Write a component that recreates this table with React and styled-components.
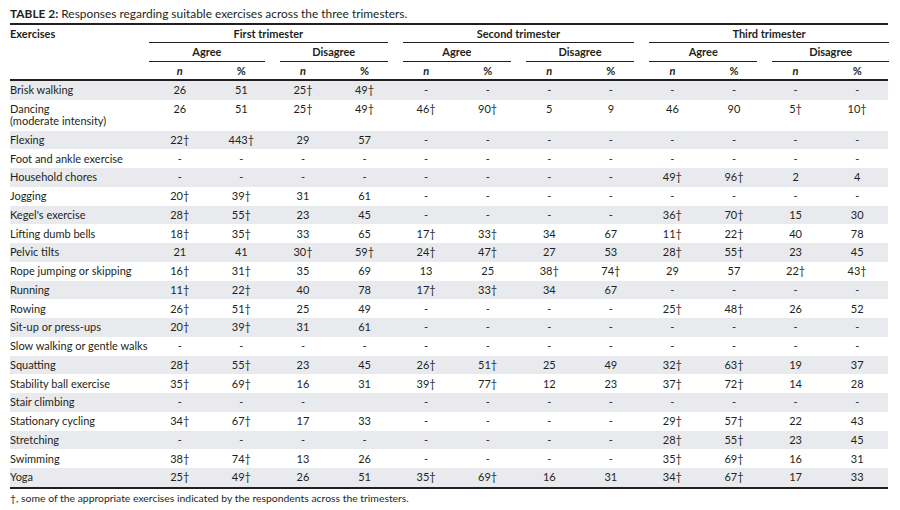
import React from "react"
import styled, { createGlobalStyle } from "styled-components"

const GlobalStyle = createGlobalStyle`
  body {
    margin: 0;
    background: #ffffff;
    color: #231f20;
    font-family: Lato, "Liberation Sans", sans-serif;
  }
`

const Page = styled.div`
  width: 900px;
  height: 510px;
  padding: 7px 12px 0 10px;
  box-sizing: border-box;
`

const Caption = styled.div`
  font-size: 11.9px;
  line-height: 14px;
  white-space: nowrap;
  b {
    font-weight: 700;
  }
`

const Table = styled.table`
  width: 878px;
  margin-top: 2px;
  border-collapse: collapse;
  table-layout: fixed;
  border-top: 2px solid #231f20;
  border-bottom: 2px solid #231f20;
  font-size: 11px;
`

const Head = styled.thead`
  th {
    padding: 0;
    font-weight: 700;
    text-align: center;
    vertical-align: top;
  }
`

const Body = styled.tbody`
  border-top: 2px solid #231f20;
`

const CornerCell = styled.th`
  && {
    text-align: left;
  }
  line-height: 17px;
`

const HeadLabel = styled.div`
  line-height: ${(p) => p.$h}px;
  border-bottom: 1px solid #231f20;
  margin-left: ${(p) => (p.$first ? 0 : 7.5)}px;
  margin-right: ${(p) => (p.$last ? -1 : 7.5)}px;
  white-space: nowrap;
`

const UnitCell = styled.th`
  line-height: 17px;
  font-style: ${(p) => (p.$italic ? "italic" : "normal")};
`

const Row = styled.tr`
  background: ${(p) => (p.$shaded ? "#e9eaee" : "transparent")};
  td {
    padding: 3.375px 0;
    line-height: 12px;
    vertical-align: top;
    white-space: nowrap;
  }
`

const NameCell = styled.td`
  text-align: left;
`

const ValueCell = styled.td`
  text-align: center;
`

const Footnote = styled.div`
  margin-top: 2px;
  font-size: 10.4px;
  line-height: 14px;
  white-space: nowrap;
`

const D = "-"

const rows = [
  ["Brisk walking", ["26", "51", "25†", "49†", D, D, D, D, D, D, D, D]],
  [["Dancing", "(moderate intensity)"], ["26", "51", "25†", "49†", "46†", "90†", "5", "9", "46", "90", "5†", "10†"]],
  ["Flexing", ["22†", "443†", "29", "57", D, D, D, D, D, D, D, D]],
  ["Foot and ankle exercise", [D, D, D, D, D, D, D, D, D, D, D, D]],
  ["Household chores", [D, D, D, D, D, D, D, D, "49†", "96†", "2", "4"]],
  ["Jogging", ["20†", "39†", "31", "61", D, D, D, D, D, D, D, D]],
  ["Kegel's exercise", ["28†", "55†", "23", "45", D, D, D, D, "36†", "70†", "15", "30"]],
  ["Lifting dumb bells", ["18†", "35†", "33", "65", "17†", "33†", "34", "67", "11†", "22†", "40", "78"]],
  ["Pelvic tilts", ["21", "41", "30†", "59†", "24†", "47†", "27", "53", "28†", "55†", "23", "45"]],
  ["Rope jumping or skipping", ["16†", "31†", "35", "69", "13", "25", "38†", "74†", "29", "57", "22†", "43†"]],
  ["Running", ["11†", "22†", "40", "78", "17†", "33†", "34", "67", D, D, D, D]],
  ["Rowing", ["26†", "51†", "25", "49", D, D, D, D, "25†", "48†", "26", "52"]],
  ["Sit-up or press-ups", ["20†", "39†", "31", "61", D, D, D, D, D, D, D, D]],
  ["Slow walking or gentle walks", [D, D, D, D, D, D, D, D, D, D, D, D]],
  ["Squatting", ["28†", "55†", "23", "45", "26†", "51†", "25", "49", "32†", "63†", "19", "37"]],
  ["Stability ball exercise", ["35†", "69†", "16", "31", "39†", "77†", "12", "23", "37†", "72†", "14", "28"]],
  ["Stair climbing", [D, D, D, "", D, D, D, D, D, D, D, D]],
  ["Stationary cycling", ["34†", "67†", "17", "33", D, D, D, D, "29†", "57†", "22", "43"]],
  ["Stretching", [D, D, D, D, D, D, D, D, "28†", "55†", "23", "45"]],
  ["Swimming", ["38†", "74†", "13", "26", D, D, D, D, "35†", "69†", "16", "31"]],
  ["Yoga", ["25†", "49†", "26", "51", "35†", "69†", "16", "31", "34†", "67†", "17", "33"]],
]

const trimesters = ["First trimester", "Second trimester", "Third trimester"]

function App() {
  return (
    <Page>
      <GlobalStyle />
      <Caption>
        <b>TABLE 2:</b> Responses regarding suitable exercises across the three trimesters.
      </Caption>
      <Table>
        <colgroup>
          <col style={{ width: 139 }} />
          {Array.from({ length: 12 }).map((_, i) => (
            <col key={i} />
          ))}
        </colgroup>
        <Head>
          <tr>
            <CornerCell rowSpan={3}>Exercises</CornerCell>
            {trimesters.map((t, i) => (
              <th key={t} colSpan={4}>
                <HeadLabel $h={17} $first={i === 0} $last={i === 2}>
                  {t}
                </HeadLabel>
              </th>
            ))}
          </tr>
          <tr>
            {[0, 1, 2, 3, 4, 5].map((i) => (
              <th key={i} colSpan={2}>
                <HeadLabel $h={18} $first={i === 0} $last={i === 5}>
                  {i % 2 === 0 ? "Agree" : "Disagree"}
                </HeadLabel>
              </th>
            ))}
          </tr>
          <tr>
            {Array.from({ length: 12 }).map((_, i) => (
              <UnitCell key={i} $italic={i % 2 === 0}>
                {i % 2 === 0 ? "n" : "%"}
              </UnitCell>
            ))}
          </tr>
        </Head>
        <Body>
          {rows.map(([name, values], r) => (
            <Row key={r} $shaded={r % 2 === 0}>
              <NameCell>
                {Array.isArray(name)
                  ? name.map((line) => <div key={line}>{line}</div>)
                  : name}
              </NameCell>
              {values.map((v, i) => (
                <ValueCell key={i}>{v}</ValueCell>
              ))}
            </Row>
          ))}
        </Body>
      </Table>
      <Footnote>†, some of the appropriate exercises indicated by the respondents across the trimesters.</Footnote>
    </Page>
  )
}

export default App
